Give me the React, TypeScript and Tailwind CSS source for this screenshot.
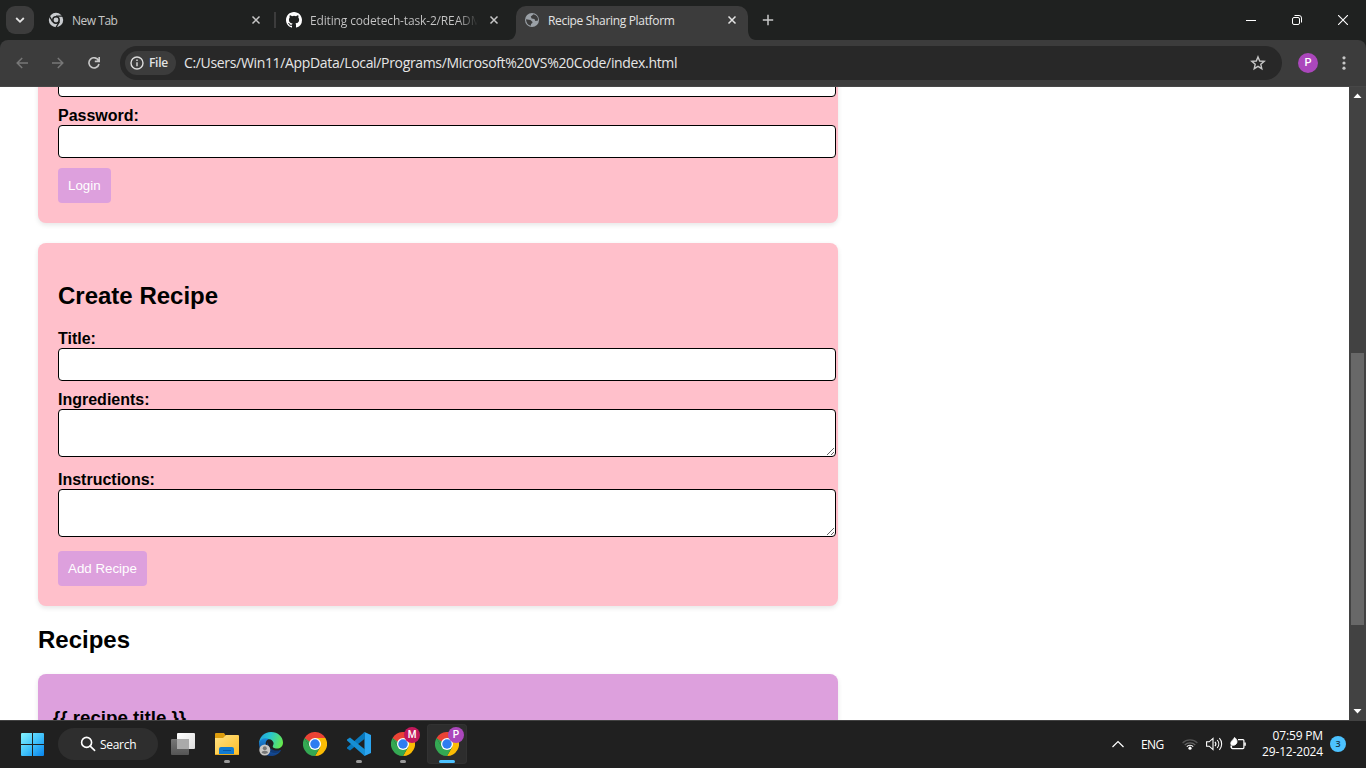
import React from "react";

const UI = "font-['Open_Sans','Noto_Sans',sans-serif]";

function ChromeMono() {
  return (
    <svg width="16" height="16" viewBox="0 0 16 16" fill="none">
      <circle cx="8" cy="8" r="7.2" fill="#c9cccf" />
      <circle cx="8" cy="8" r="3.2" fill="#c9cccf" stroke="#1f2120" strokeWidth="1.5" />
      <path d="M8 4.2H15M4.7 9.9L1.2 3.9M11.3 9.9L7.8 15.8" stroke="#1f2120" strokeWidth="1.3" />
    </svg>
  );
}

function ChromeColor() {
  return (
    <svg width="24" height="24" viewBox="0 0 48 48">
      <path d="M24 24L3.2 12A24 24 0 0 1 44.8 12Z" fill="#ea4335" />
      <path d="M24 12H44.8A24 24 0 0 1 24 48L34.4 30Z" fill="#fbbc04" />
      <path d="M3.2 12A24 24 0 0 0 24 48L34.4 30L13.6 30Z" fill="#34a853" />
      <path d="M3.2 12L13.6 30L24 24L24 12Z" fill="#34a853" />
      <path d="M3.2 12H24V13L13 19Z" fill="#ea4335" />
      <circle cx="24" cy="24" r="12" fill="#fff" />
      <circle cx="24" cy="24" r="9.5" fill="#2f7df0" />
    </svg>
  );
}

function GithubMark() {
  return (
    <svg width="16" height="16" viewBox="0 0 16 16" fill="#fff">
      <path d="M8 0C3.58 0 0 3.58 0 8c0 3.54 2.29 6.53 5.47 7.59.4.07.55-.17.55-.38 0-.19-.01-.82-.01-1.49-2.01.37-2.53-.49-2.69-.94-.09-.23-.48-.94-.82-1.13-.28-.15-.68-.52-.01-.53.63-.01 1.08.58 1.23.82.72 1.21 1.87.87 2.33.66.07-.52.28-.87.51-1.07-1.78-.2-3.64-.89-3.64-3.95 0-.87.31-1.59.82-2.15-.08-.2-.36-1.02.08-2.12 0 0 .67-.21 2.2.82a7.6 7.6 0 0 1 4 0c1.53-1.04 2.2-.82 2.2-.82.44 1.1.16 1.92.08 2.12.51.56.82 1.27.82 2.15 0 3.07-1.87 3.75-3.65 3.95.29.25.54.73.54 1.48 0 1.07-.01 1.93-.01 2.2 0 .21.15.46.55.38A8.01 8.01 0 0 0 16 8c0-4.42-3.58-8-8-8Z" />
    </svg>
  );
}

function Globe() {
  return (
    <svg width="16" height="16" viewBox="0 0 16 16">
      <circle cx="8" cy="8" r="7" fill="#9aa0a6" />
      <path d="M9.6 2.2L6.8 4.4 7.6 6.5 10.4 7.1 11.4 9 14 8.6A6 6 0 0 0 9.6 2.2ZM2.1 7.2L6.4 8.1 8.6 9.9 8 11.5 7 11.7 6.9 13.8A6 6 0 0 1 2.1 7.2Z" fill="#3c3c3c" />
    </svg>
  );
}

function Close({ color }: { color: string }) {
  return (
    <svg width="10" height="10" viewBox="0 0 10 10" stroke={color} strokeWidth="1.5">
      <path d="M1.5 1.5l7 7M8.5 1.5l-7 7" />
    </svg>
  );
}

function TabStrip() {
  return (
    <div className="flex h-10 shrink-0 bg-[#1f2120] text-[#c7c7c7]">
      <button className="mt-1.5 ml-1.5 flex h-7 w-7 items-center justify-center rounded-[9px] bg-[#3c3c3c]">
        <svg width="10" height="8" viewBox="0 0 10 8" fill="none" stroke="#e3e3e3" strokeWidth="1.8">
          <path d="M1.2 2L5 5.8 8.8 2" />
        </svg>
      </button>
      <div className="ml-3.5 flex w-[226px] items-center">
        <ChromeMono />
        <span className="ml-2 flex-1 pt-px text-[12px] tracking-[-0.48px]">New Tab</span>
        <span className="mr-[13px]"><Close color="#c7c7c7" /></span>
      </div>
      <div className="mt-3 h-4 w-0.5 bg-[#3c3c3c]" />
      <div className="ml-2.5 flex w-[222px] items-center">
        <GithubMark />
        <span className="ml-2 w-[168px] overflow-hidden bg-linear-to-r from-[#c7c7c7] from-88% to-transparent bg-clip-text pt-px text-[12px] tracking-[-0.15px] whitespace-nowrap text-transparent">
          Editing codetech-task-2/README
        </span>
        <span className="ml-[11px]"><Close color="#c7c7c7" /></span>
      </div>
      <div className="flex w-2 items-end">
        <svg width="8" height="10" viewBox="0 0 8 10"><path d="M8 0V10H0C5 10 8 6 8 0Z" fill="#3c3c3c" /></svg>
      </div>
      <div className="mt-1.5 flex w-[232px] items-center rounded-t-[10px] bg-[#3c3c3c] pb-1.5 pl-2 text-[#e3e3e3]">
        <Globe />
        <span className="ml-2 flex-1 pt-px text-[12px] tracking-[-0.33px] whitespace-nowrap">Recipe Sharing Platform</span>
        <span className="mr-[11px]"><Close color="#e3e3e3" /></span>
      </div>
      <div className="flex w-2 items-end">
        <svg width="8" height="10" viewBox="0 0 8 10"><path d="M0 0V10H8C3 10 0 6 0 0Z" fill="#3c3c3c" /></svg>
      </div>
      <div className="ml-1.5 flex items-center">
        <svg width="12" height="12" viewBox="0 0 12 12" stroke="#c7c7c7" strokeWidth="1.5"><path d="M6 .8v10.4M.8 6h10.4" /></svg>
      </div>
      <div className="ml-auto flex">
        <div className="flex w-[46px] items-center justify-center">
          <svg width="10" height="10" viewBox="0 0 10 10" stroke="#fff"><path d="M0 5.5h10" /></svg>
        </div>
        <div className="flex w-[46px] items-center justify-center">
          <svg width="10" height="10" viewBox="0 0 10 10" fill="none" stroke="#fff">
            <rect x=".5" y="2.5" width="7" height="7" rx="1.5" />
            <path d="M2.5.5H7A2.5 2.5 0 0 1 9.5 3V7.5" />
          </svg>
        </div>
        <div className="flex w-[46px] items-center justify-center">
          <svg width="10" height="10" viewBox="0 0 10 10" stroke="#fff" strokeWidth="1.1"><path d="M0 0l10 10M10 0L0 10" /></svg>
        </div>
      </div>
    </div>
  );
}

function Toolbar() {
  return (
    <div className="flex h-[47px] shrink-0 bg-[#1f2120]">
      <div className="flex flex-1 items-center rounded-t-[8px] border-b border-[#474747] bg-[#3c3c3c]">
        <svg className="ml-4" width="12" height="12" viewBox="0 0 12 12" fill="none" stroke="#777" strokeWidth="1.5">
          <path d="M12 6H1.2M6.2 1L1.2 6l5 5" />
        </svg>
        <svg className="ml-6" width="12" height="12" viewBox="0 0 12 12" fill="none" stroke="#777" strokeWidth="1.5">
          <path d="M0 6h10.8M5.8 1l5 5-5 5" />
        </svg>
        <svg className="ml-6" width="12" height="12" viewBox="0 0 12 12" fill="none" stroke="#c7c7c7" strokeWidth="1.6">
          <path d="M10.6 3.6A5.1 5.1 0 1 0 11 7M11.2 0v4.4H6.8" />
        </svg>
        <div className="ml-5 flex h-[34px] w-[1162px] items-center rounded-full bg-[#282828] text-[#e3e3e3]">
          <div className="ml-[5px] flex h-6 w-[51px] items-center rounded-full bg-[#3c3c3c]">
            <svg className="ml-[5px]" width="14" height="14" viewBox="0 0 14 14" fill="none" stroke="#dcdcdc" strokeWidth="1.4">
              <circle cx="7" cy="7" r="6" />
              <path d="M7 6.2v4M7 3.6v1.5" />
            </svg>
            <span className="ml-[5px] text-[12px] font-semibold tracking-[-0.3px]">File</span>
          </div>
          <span className="ml-2 pb-0.5 text-[14px] tracking-[-0.335px] whitespace-nowrap text-[#e6e6e6]">
            C:/Users/Win11/AppData/Local/Programs/Microsoft%20VS%20Code/index.html
          </span>
          <svg className="mr-4 ml-auto" width="16" height="16" viewBox="0 0 16 16" fill="none" stroke="#c7c7c7" strokeWidth="1.4">
            <path d="M8 1.9l1.7 4.1 4.5.4-3.4 2.9 1 4.4L8 11.4l-3.8 2.3 1-4.4L1.8 6.4 6.3 6z" />
          </svg>
        </div>
        <div className="ml-4 flex h-5 w-5 items-center justify-center rounded-full bg-[#ab47bc] font-['Roboto',sans-serif] text-[11px] font-medium text-white">P</div>
        <svg className="ml-6" width="4" height="14" viewBox="0 0 4 14" fill="#c7c7c7">
          <circle cx="2" cy="1.8" r="1.6" /><circle cx="2" cy="7" r="1.6" /><circle cx="2" cy="12.2" r="1.6" />
        </svg>
      </div>
    </div>
  );
}

const field = "block w-[778px] rounded-[4px] border border-black bg-white p-2 outline-none";
const button = "block h-[35px] rounded-[4px] bg-[#dda0dd] px-2.5 text-[13.333px] text-white";
const label = "block h-[18px] text-[16px] leading-[18px] font-bold";
const card = "w-[800px] rounded-[8px] bg-[#ffc0cb] px-5 pb-5 shadow-[0_2px_5px_rgba(0,0,0,0.1)]";

function Page() {
  return (
    <div className="flex min-h-0 flex-1 bg-white">
      <main className="flex-1 overflow-hidden pl-[38px] font-['Liberation_Sans',Arial,sans-serif] text-black">
        <section className={card}>
          <input className={`${field} -mt-[23px] h-[33px]`} />
          <label className={`${label} mt-2.5`}>Password:</label>
          <input type="password" className={`${field} h-[33px]`} />
          <button className={`${button} mt-2.5`}>Login</button>
        </section>
        <section className={`${card} mt-5 pt-[39px]`}>
          <h2 className="h-[27px] text-[24px] leading-[27px] font-bold">Create Recipe</h2>
          <label className={`${label} mt-[21px]`}>Title:</label>
          <input className={`${field} h-[33px]`} />
          <label className={`${label} mt-2.5`}>Ingredients:</label>
          <textarea className={`${field} h-12 resize`} />
          <label className={`${label} mt-3.5`}>Instructions:</label>
          <textarea className={`${field} h-12 resize`} />
          <button className={`${button} mt-3.5`}>Add Recipe</button>
        </section>
        <h2 className="mt-5 h-[27px] text-[24px] leading-[27px] font-bold">Recipes</h2>
        <section className="mt-[21px] h-40 w-[800px] rounded-[8px] bg-[#dda0dd] px-[15px] pt-[33px] shadow-[0_2px_5px_rgba(0,0,0,0.1)]">
          <h3 className="text-[18.72px] leading-[22px] font-bold">{"{{ recipe.title }}"}</h3>
        </section>
      </main>
      <div className="flex w-[17px] flex-col items-center bg-[#424242]">
        <svg className="mt-1.5" width="9" height="6" viewBox="0 0 9 6" fill="#fff"><path d="M4.5.5L8.5 5h-8z" /></svg>
        <div className="mt-[254px] h-[272px] w-[13px] bg-[#686868]" />
        <svg className="mt-auto mb-1.5" width="9" height="6" viewBox="0 0 9 6" fill="#fff"><path d="M4.5 5.5L.5 1h8z" /></svg>
      </div>
    </div>
  );
}

function DockItem({ children, state, badge }: { children: React.ReactNode; state?: "open" | "active"; badge?: "M" | "P" }) {
  return (
    <div className={`relative mx-0.5 flex h-10 w-10 items-center justify-center rounded-[4px] ${state === "active" ? "bg-[#2d2d2d] ring-1 ring-[#323232] ring-inset" : ""}`}>
      {children}
      {badge && (
        <span className={`absolute top-[3px] right-[3px] flex h-4 w-4 items-center justify-center rounded-full font-['Roboto',sans-serif] text-[10px] leading-none font-medium text-white ${badge === "M" ? "bg-[#c2185b]" : "bg-[#ab47bc]"}`}>
          {badge}
        </span>
      )}
      {state === "open" && <span className="absolute bottom-px h-[3px] w-1.5 rounded-full bg-[#9a9a9a]" />}
      {state === "active" && <span className="absolute bottom-px h-[3px] w-4 rounded-full bg-[#4cc2ff]" />}
    </div>
  );
}

function Taskbar() {
  return (
    <div className="flex h-12 shrink-0 items-center border-t border-[#424242] bg-[#202020] pb-px pl-5 text-white">
      <svg className="ml-px" width="23" height="23" viewBox="0 0 23 23">
        <defs>
          <linearGradient id="win" x1="0" y1="0" x2="23" y2="23" gradientUnits="userSpaceOnUse">
            <stop stopColor="#85f3ff" /><stop offset=".5" stopColor="#42c3fa" /><stop offset="1" stopColor="#0783ed" />
          </linearGradient>
        </defs>
        <path fill="url(#win)" d="M1 0h10v11H0V1q0-1 1-1zM12 0h10q1 0 1 1v10H12zM0 12h11v11H1q-1 0-1-1zM12 12h11v10q0 1-1 1H12z" />
      </svg>
      <div className="ml-3.5 flex h-8 w-[100px] items-center rounded-full bg-[#2e2e2e]">
        <svg className="ml-[22px]" width="16" height="16" viewBox="0 0 16 16" fill="none" stroke="#fff" strokeWidth="1.6">
          <circle cx="6.6" cy="6.4" r="5" /><path d="M10.2 10.1l4.4 4.3" strokeLinecap="round" />
        </svg>
        <span className="ml-1 pt-px text-[12px] tracking-[-0.3px]">Search</span>
      </div>
      <div className="ml-[3px] flex">
        <DockItem>
          <svg width="24" height="24" viewBox="0 0 24 24">
            <defs>
              <linearGradient id="tv" x1="0" y1="0" x2="1" y2="1"><stop stopColor="#fff" /><stop offset="1" stopColor="#ddd" /></linearGradient>
              <linearGradient id="tg" x1="0" y1="0" x2="0" y2="1"><stop stopColor="#777" /><stop offset="1" stopColor="#555" /></linearGradient>
            </defs>
            <rect x="6" y="1" width="18" height="16" rx="1" fill="url(#tv)" />
            <rect y="7" width="18" height="16" rx="1" fill="url(#tg)" />
            <path d="M6 7h12v10H6z" fill="#aaa" />
          </svg>
        </DockItem>
        <DockItem state="open">
          <svg width="24" height="24" viewBox="0 0 24 24">
            <defs><linearGradient id="fd" x1="0" y1="0" x2="1" y2="1"><stop stopColor="#ffe285" /><stop offset="1" stopColor="#ffbd25" /></linearGradient></defs>
            <path d="M0 2q0-1 1-1h8l2 3v4H0z" fill="#dd9c0c" />
            <path d="M0 6h8l3-3h12q1 0 1 1v19H0z" fill="url(#fd)" />
            <path d="M4 22v-5q0-2 2-2h11q2 0 2 2v5z" fill="#127bd0" />
            <path d="M8 18h8v1H8z" fill="#0759a8" /><path d="M0 22h24v1H0z" fill="#e6a81e" />
          </svg>
        </DockItem>
        <DockItem>
          <svg width="24" height="24" viewBox="0 0 24 24">
            <defs>
              <linearGradient id="e1" x1="0" y1="0" x2="24" y2="10" gradientUnits="userSpaceOnUse"><stop stopColor="#1f98df" /><stop offset=".45" stopColor="#28c6cf" /><stop offset="1" stopColor="#67e94b" /></linearGradient>
              <linearGradient id="e2" x1="0" y1="0" x2="0" y2="1"><stop stopColor="#1988dc" /><stop offset="1" stopColor="#123e85" /></linearGradient>
            </defs>
            <path d="M0 12C0 5 5 0 12 0s12 5 12 10.5c0 4-3 6-6 6-3 0-5-1-4-3 2-3-1-6.500-5-6.500C4 7 1 9 0 12Z" fill="url(#e1)" />
            <path d="M0 11C1 7 6 5 10 7c-3 1-4 4-3 7 1 5 8 8 15 4-2 4-6 6-10 6C5 24 0 19 0 11Z" fill="url(#e2)" />
            <path d="M9 10c-3 4 0 10 6 11 3 .5 6-1 7-3-7 2-13-1-13-8Z" fill="#103a78" />
            <circle cx="5.800" cy="18" r="5.500" fill="#c9c7c5" /><circle cx="5.800" cy="16.200" r="2" fill="#777" /><path d="M2.700 21q0-2.300 3.100-2.300T8.900 21L5.800 22z" fill="#777" />
          </svg>
        </DockItem>
        <DockItem><ChromeColor /></DockItem>
        <DockItem state="open">
          <svg width="24" height="24" viewBox="0 0 24 24">
            <path d="M17.5 0L24 3v18l-6.5 3z" fill="#2ba5f0" />
            <path d="M18 0v6.5L3 18.5 0 16.4v-1L17 .5z" fill="#0878bd" />
            <path d="M18 24v-6.5L3 5.5 0 7.6v1L17 23.5z" fill="#168fd5" />
          </svg>
        </DockItem>
        <DockItem state="open" badge="M"><ChromeColor /></DockItem>
        <DockItem state="active" badge="P"><ChromeColor /></DockItem>
      </div>
      <svg className="ml-auto" width="12" height="8" viewBox="0 0 12 8" fill="none" stroke="#fff" strokeWidth="1.2"><path d="M.5 7L6 1.5 11.5 7" /></svg>
      <span className="ml-[17px] w-6 pt-px text-[12px] tracking-[-0.55px]">ENG</span>
      <svg className="ml-[17px]" width="16" height="12" viewBox="0 0 16 12" fill="none" strokeWidth="1.2">
        <path d="M.6 5A10.4 10.4 0 0 1 15.4 5" stroke="#555" />
        <path d="M2.7 7A7.5 7.5 0 0 1 13.3 7" stroke="#666" />
        <path d="M4.8 8.6A4.5 4.5 0 0 1 11.2 8.6" stroke="#fff" />
        <circle cx="8" cy="10.2" r="1.6" fill="#fff" />
      </svg>
      <svg className="ml-2" width="17" height="14" viewBox="0 0 17 14" fill="none" stroke="#fff" strokeWidth="1.1">
        <path d="M.6 4.8h2.6L7 1.4v11.2L3.2 9.2H.6zM9 4.8a3.500 3.500 0 0 1 0 4.400M11.200 3a6 6 0 0 1 0 8M13.400 1.200a8.600 8.600 0 0 1 0 11.600" />
      </svg>
      <svg className="ml-[7px]" width="17" height="14" viewBox="0 0 17 14" fill="none" stroke="#fff" strokeWidth="1.2">
        <path d="M8 2.600h4.900q1 0 1 1v7q0 1-1 1H2.500q-1 0-1-1V9M15.200 5.500v3.200" />
        <path d="M1.300 8C-.7 4.700 3.500 3 4.500.400c3 2 3.500 6 .5 7.400C4 8.500 2.500 8.500 1.300 8L.600 10.500" fill="#fff" strokeWidth=".8" />
      </svg>
      <div className="ml-3.5 w-[62px] text-right text-[12px] leading-4 whitespace-nowrap">
        <div className="tracking-[-0.16px]">07:59 PM</div>
        <div className="tracking-[-0.17px]">29-12-2024</div>
      </div>
      <div className="mr-5 ml-[7px] flex h-4 w-4 items-center justify-center rounded-full bg-[#4cc2ff] text-[9px] font-semibold text-[#16384b]">3</div>
    </div>
  );
}

export default function App() {
  return (
    <div className={`flex h-[768px] w-[1366px] flex-col overflow-hidden ${UI}`}>
      <TabStrip />
      <Toolbar />
      <Page />
      <Taskbar />
    </div>
  );
}
